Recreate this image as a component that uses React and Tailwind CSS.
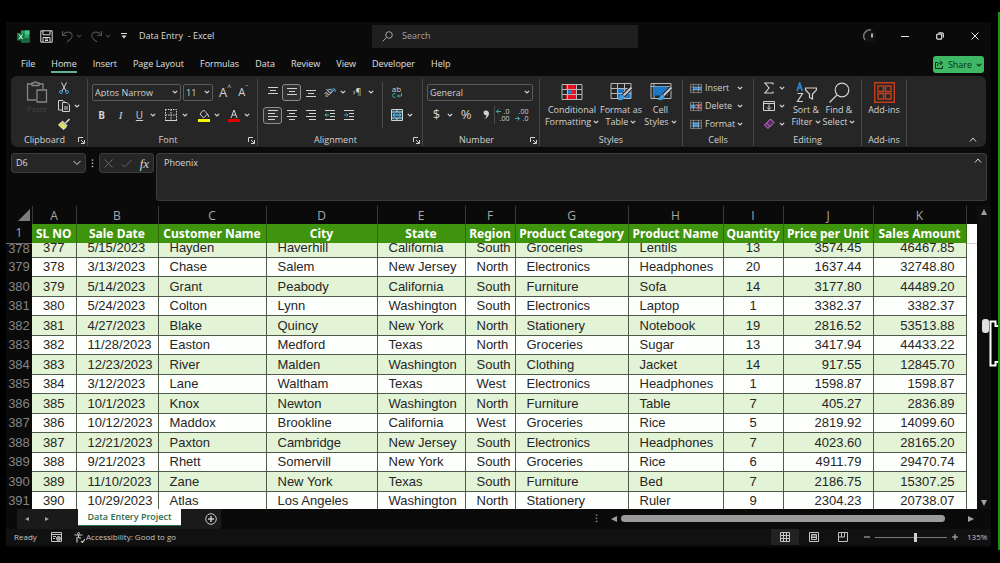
import React, { useState } from 'react';

const rows = [
  [378, 377, '5/15/2023', 'Hayden', 'Haverhill', 'California', 'South', 'Groceries', 'Lentils', 13, '3574.45', '46467.85'],
  [379, 378, '3/13/2023', 'Chase', 'Salem', 'New Jersey', 'North', 'Electronics', 'Headphones', 20, '1637.44', '32748.80'],
  [380, 379, '5/14/2023', 'Grant', 'Peabody', 'California', 'South', 'Furniture', 'Sofa', 14, '3177.80', '44489.20'],
  [381, 380, '5/24/2023', 'Colton', 'Lynn', 'Washington', 'South', 'Electronics', 'Laptop', 1, '3382.37', '3382.37'],
  [382, 381, '4/27/2023', 'Blake', 'Quincy', 'New York', 'North', 'Stationery', 'Notebook', 19, '2816.52', '53513.88'],
  [383, 382, '11/28/2023', 'Easton', 'Medford', 'Texas', 'North', 'Groceries', 'Sugar', 13, '3417.94', '44433.22'],
  [384, 383, '12/23/2023', 'River', 'Malden', 'Washington', 'South', 'Clothing', 'Jacket', 14, '917.55', '12845.70'],
  [385, 384, '3/12/2023', 'Lane', 'Waltham', 'Texas', 'West', 'Electronics', 'Headphones', 1, '1598.87', '1598.87'],
  [386, 385, '10/1/2023', 'Knox', 'Newton', 'Washington', 'North', 'Furniture', 'Table', 7, '405.27', '2836.89'],
  [387, 386, '10/12/2023', 'Maddox', 'Brookline', 'California', 'West', 'Groceries', 'Rice', 5, '2819.92', '14099.60'],
  [388, 387, '12/21/2023', 'Paxton', 'Cambridge', 'New Jersey', 'South', 'Electronics', 'Headphones', 7, '4023.60', '28165.20'],
  [389, 388, '9/21/2023', 'Rhett', 'Somervill', 'New York', 'South', 'Groceries', 'Rice', 6, '4911.79', '29470.74'],
  [390, 389, '11/10/2023', 'Zane', 'New York', 'Texas', 'South', 'Furniture', 'Bed', 7, '2186.75', '15307.25'],
  [391, 390, '10/29/2023', 'Atlas', 'Los Angeles', 'Washington', 'North', 'Stationery', 'Ruler', 9, '2304.23', '20738.07'],
];

const columns = [
  { letter: 'A', title: 'SL NO', width: 'w-[44px]', cell: 'justify-center' },
  { letter: 'B', title: 'Sale Date', width: 'w-[82px]', cell: 'pl-[11px]' },
  { letter: 'C', title: 'Customer Name', width: 'w-[108px]', cell: 'pl-[11px]' },
  { letter: 'D', title: 'City', width: 'w-[111px]', cell: 'pl-[11px]' },
  { letter: 'E', title: 'State', width: 'w-[88px]', cell: 'pl-[11px]' },
  { letter: 'F', title: 'Region', width: 'w-[50px]', cell: 'pl-[11px]' },
  { letter: 'G', title: 'Product Category', width: 'w-[113px]', cell: 'pl-[11px]' },
  { letter: 'H', title: 'Product Name', width: 'w-[95px]', cell: 'pl-[11px]' },
  { letter: 'I', title: 'Quantity', width: 'w-[60px]', cell: 'justify-center' },
  { letter: 'J', title: 'Price per Unit', width: 'w-[90px]', cell: 'justify-end pr-[11px]' },
  { letter: 'K', title: 'Sales Amount', width: 'w-[93px]', cell: 'justify-end pr-[11px]' },
];

const tabs = ['File', 'Home', 'Insert', 'Page Layout', 'Formulas', 'Data', 'Review', 'View', 'Developer', 'Help'];

const Svg = ({ className = 'size-3', box = '0 0 12 12', children }) => (
  <svg className={className} viewBox={box} fill="none" stroke="currentColor" strokeWidth="1" aria-hidden="true">
    {children}
  </svg>
);

const Chevron = () => (
  <Svg className="h-1 w-[6px] shrink-0" box="0 0 6 4">
    <path d="M.8 .8 3 3 5.2 .8" strokeWidth="1.2" />
  </Svg>
);

const Tool = ({ label, active, className = 'w-[19px]', children }) => (
  <button aria-label={label} className={`flex h-[17px] shrink-0 items-center justify-center rounded-[3px] ${active ? 'border border-[#8a8a8a] bg-[#303030]' : ''} ${className}`}>
    {children}
  </button>
);

const Drop = ({ label, className = 'w-2' }) => (
  <button aria-label={label} className={`flex h-[17px] shrink-0 items-center justify-center ${className}`}>
    <Chevron />
  </button>
);

const Rule = () => <span className="h-[18px] w-px shrink-0 bg-[#4a4a4a]" />;

const Group = ({ name, width, launcher, children }) => (
  <section aria-label={name} className={`flex shrink-0 flex-col border-r border-[#474747] ${width}`}>
    <div className="h-[55px]">{children}</div>
    <div className="flex h-3 items-center justify-center text-[9px]">
      <span className="flex-1 text-center">{name}</span>
      {launcher && (
        <button aria-label={`${name} settings`} className="mr-[2px]">
          <Svg className="size-[7px]" box="0 0 7 7">
            <path d="M.5 5V.5H5M3 3l3 3M6.5 3v3.5H3" />
          </Svg>
        </button>
      )}
    </div>
  </section>
);

const Select = ({ label, value, width }) => (
  <span className={`relative flex items-center ${width}`}>
    <select aria-label={label} className="h-[17px] w-full appearance-none rounded-[2px] border border-[#5c5c5c] bg-[#262626] pl-[2px] text-[9px] leading-none">
      <option>{value}</option>
    </select>
    <span className="pointer-events-none absolute right-[3px]"><Chevron /></span>
  </span>
);

// horizontal bars, each given as [x, y, length]
const Lines = ({ bars }) => (
  <Svg>
    {bars.map(([x, y, w]) => <path key={y} d={`M${x} ${y}h${w}`} />)}
  </Svg>
);

const GridIcon = ({ className, children }) => (
  <Svg className={className} box="0 0 22 18">
    {children}
    <path d="M1 1.500h20v15H1zM1 6.500h20M1 11.500h20M6.500 1.500v15M15.500 1.500v15" stroke="#b8b8b8" />
  </Svg>
);

const Brush = () => (
  <>
    <path d="M21.500 5.500 13 14" stroke="#222" strokeWidth="4" />
    <path d="m21.500 5.500-8 8" stroke="#c9c9c9" strokeWidth="2" />
    <path d="M13 13c-3-.5-3 2-5.500 4.500 3 1.500 7 .5 7-2.500z" fill="#3f9be0" stroke="none" />
  </>
);

const BigTool = ({ icon, top, bottom, width }) => (
  <button className={`flex shrink-0 flex-col items-center text-[9px] leading-3 ${width}`}>
    <span className="flex h-6 items-center">{icon}</span>
    <span>{top}</span>
    {bottom && <span className="flex items-center gap-[2px]">{bottom}<Chevron /></span>}
  </button>
);

const CellTool = ({ icon, name }) => (
  <button className="flex h-[18px] items-center text-[9px]">
    {icon}
    <span className="ml-[3px] w-8 text-left">{name}</span>
    <Chevron />
  </button>
);

const Decimal = ({ label, top, bottom, arrow }) => (
  <Tool label={label}>
    <span className="relative text-right text-[7px] leading-[7px]">
      <span className="block">{top}</span>
      <span className="block">{bottom}</span>
      <Svg className={`absolute -left-1 size-[5px] text-[#3fa9a9] ${arrow}`} box="0 0 5 5"><path d="M5 2.500H.5M2.500 .5l-2 2 2 2" /></Svg>
    </span>
  </Tool>
);

const TitleBar = () => (
  <header className="flex h-7 items-center">
    <div className="flex w-[366px] items-center pl-[11px] text-[#dcdcdc]">
      <Svg className="size-[13px]" box="0 0 13 13">
        <path d="M4 .5h8.500v12H4z" fill="#27a366" stroke="none" />
        <path d="M8 .5h4.500v4H8z" fill="#46c889" stroke="none" />
        <path d="M4 8h8.500v4.500H4z" fill="#17683f" stroke="none" />
        <path d="M0 3h7.500v7.500H0z" fill="#10793f" stroke="none" />
        <path d="m2 4.500 3.500 4.500M5.500 4.500 2 9" stroke="#fff" />
      </Svg>
      <button aria-label="Save" className="ml-[10px]">
        <Svg className="size-[13px]" box="0 0 13 13">
          <path d="M.8.800h11.400v11.400H.8zM3 .8v4h7v-4M3 12V7.500h7V12M5 9h3M5 10.500h3" />
        </Svg>
      </button>
      <button aria-label="Undo" className="ml-2 text-[#4c4c4c]">
        <Svg className="size-[13px]" box="0 0 13 13"><path d="M1.500 1v4.500H6M1.700 5.300C4 1.500 9 1 10.800 4c1.500 3-1 5-4.800 8" strokeWidth="1.200" /></Svg>
      </button>
      <span className="ml-[2px] text-[#444]"><Chevron /></span>
      <button aria-label="Redo" className="ml-2 text-[#4c4c4c]">
        <Svg className="size-[13px]" box="0 0 13 13"><path d="M11.500 1v4.500H7M11.300 5.300C9 1.500 4 1 2.200 4c-1.500 3 1 5 4.800 8" strokeWidth="1.200" /></Svg>
      </button>
      <span className="ml-[2px] text-[#444]"><Chevron /></span>
      <button aria-label="Customize toolbar" className="ml-[10px]">
        <Svg className="size-[6px]" box="0 0 6 6"><path d="M0 .5h6" /><path d="M.5 2.500h5L3 5.500z" fill="currentColor" stroke="none" /></Svg>
      </button>
      <h1 className="ml-3 text-[9px] font-medium">Data Entry&nbsp; - Excel</h1>
    </div>
    <label className="flex h-[23px] w-[266px] items-center gap-[9px] bg-[#1f1f1f] pl-[10px] text-[#a5a5a5]">
      <Svg className="size-[11px]" box="0 0 11 11"><circle cx="7" cy="4" r="3.300" /><path d="M4.500 6.500.5 10.500" /></Svg>
      <input aria-label="Search" placeholder="Search" className="w-40 bg-transparent text-[9px] outline-none placeholder:text-[#a5a5a5]" />
    </label>
    <div className="ml-auto flex items-center pr-3 text-[#e0e0e0]">
      <Svg className="mr-[23px] size-4" box="0 0 16 16">
        <circle cx="8" cy="8" r="6.500" fill="#131313" stroke="none" />
        <path d="M3 12A6.500 6.500 0 0 1 9 1.700" stroke="#777" strokeWidth="1.500" />
        <path d="M10 5.500v4" strokeWidth="1.500" />
      </Svg>
      <button aria-label="Minimize" className="mr-[27px]"><Svg className="size-2" box="0 0 8 8"><path d="M0 4.500h8" /></Svg></button>
      <button aria-label="Restore" className="mr-[27px]">
        <Svg className="size-2" box="0 0 8 8"><rect x=".7" y="2.200" width="5" height="5" rx="1" strokeWidth="1.200" /><path d="M2.500 .8H6q1.300 0 1.300 1.300v3.400" strokeWidth="1.200" /></Svg>
      </button>
      <button aria-label="Close"><Svg className="size-2" box="0 0 8 8"><path d="m.5.5 7 7M7.500.5l-7 7" /></Svg></button>
    </div>
  </header>
);

const Ribbon = () => (
  <div className="ml-[5px] mr-[5px] flex h-[71px] rounded-md bg-[#262626] pb-px pt-[3px] text-[#d2d2d2]">
    <Group name="Clipboard" width="w-[77px]" launcher>
      <div className="flex pl-[13px]">
        <button className="flex w-[26px] flex-col items-center pt-[2px] text-[8px] text-[#454545]">
          <Svg className="size-[22px] text-[#858585]" box="0 0 22 22">
            <path d="M6 3H1.500v16H10M13 3h4v5M6 4.500V2h2c0-1.500 3-1.500 3 0h2v2.500zM11 9h9.500v12H11z" strokeWidth="1.300" />
          </Svg>
          Paste
        </button>
        <div className="ml-1 flex flex-col gap-px">
          <Tool label="Cut"><Svg><path d="M3.500.5 8 9M8.500.5 4 9" /><circle cx="3" cy="10" r="1.500" stroke="#4a9fd8" /><circle cx="9" cy="10" r="1.500" stroke="#4a9fd8" /></Svg></Tool>
          <div className="flex items-center">
            <Tool label="Copy"><Svg><path d="M4 10H.5V.5H5L6.500 2M4.500 2.500H9l2.500 2.500v6.500h-7zM6 7h4M6 9h4" /></Svg></Tool>
            <Drop label="Copy options" />
          </div>
          <Tool label="Format Painter"><Svg><path d="m11.500 1-4 4M4 3l5 5" strokeWidth="1.600" /><path d="m3.500 4 5 5-3 2.500L.5 7z" fill="#dfe05e" stroke="#e6e6b0" /></Svg></Tool>
        </div>
      </div>
    </Group>

    <Group name="Font" width="w-[170px]" launcher>
      <div className="flex h-[26px] items-center pl-1">
        <Select label="Font family" value="Aptos Narrow" width="w-[89px]" />
        <span className="ml-[2px]"><Select label="Font size" value="11" width="w-[30px]" /></span>
        <button aria-label="Increase font size" className="ml-[6px] flex text-[13px] leading-4">A<span className="text-[7px] leading-2">^</span></button>
        <button aria-label="Decrease font size" className="ml-[7px] flex text-[11px] leading-4">A<span className="text-[7px] leading-2">ˇ</span></button>
      </div>
      <div className="flex h-5 items-center pl-1">
        <Tool label="Bold"><b className="text-[10px]">B</b></Tool>
        <Tool label="Italic"><i className="font-[Liberation_Serif] text-[11px]">I</i></Tool>
        <Tool label="Underline"><u className="text-[10px]">U</u></Tool>
        <Drop label="Underline options" />
        <span className="mx-1"><Rule /></span>
        <Tool label="Borders" className="w-3"><Svg><path d="M.5.5h11v11H.5zM6 .5v11M.5 6h11" strokeDasharray="1.500 1" /><path d="M0 11.500h12" /></Svg></Tool>
        <Drop label="Border options" className="w-4" />
        <span className="mr-[5px]"><Rule /></span>
        <Tool label="Fill color" className="w-3">
          <Svg className="h-[13px] w-3" box="0 0 12 13"><path d="m5.500 1 4 4-4 4-3.500-4zM9.500 5l1.500 3" /><path d="M0 10h12v3H0z" fill="#f5f500" stroke="none" /></Svg>
        </Tool>
        <Drop label="Fill options" className="w-[14px]" />
        <Tool label="Font color" className="ml-1 w-3">
          <Svg className="h-[13px] w-3" box="0 0 12 13"><path d="M3 9l3-8 3 8M4 6h4" /><path d="M0 10h12v3H0z" fill="#e00000" stroke="none" /></Svg>
        </Tool>
        <Drop label="Font color options" className="w-[14px]" />
      </div>
    </Group>

    <Group name="Alignment" width="w-[165px]" launcher>
      <div className="flex pl-[5px]">
        <div className="w-[119px]">
          <div className="flex h-[26px] items-center">
            <Tool label="Top align"><Lines bars={[[1, 1.5, 10], [3, 4.5, 6], [1, 7.5, 10]]} /></Tool>
            <Tool label="Middle align" active><Lines bars={[[1, 2.5, 10], [3, 5.5, 6], [1, 8.5, 10]]} /></Tool>
            <Tool label="Bottom align"><Lines bars={[[1, 4.5, 10], [3, 7.5, 6], [1, 10.5, 10]]} /></Tool>
            <Tool label="Orientation">
              <span className="-rotate-45 text-[8px]">ab</span>
              <Svg className="-ml-1 size-2 text-[#4a9fd8]" box="0 0 8 8"><path d="m1 7 6-6M4 1h3v3" /></Svg>
            </Tool>
            <Drop label="Orientation options" />
            <Tool label="Text direction" className="w-5 text-[9px]">›¶</Tool>
            <Drop label="Direction options" />
          </div>
          <div className="flex h-5 items-center">
            <Tool label="Align left" active><Lines bars={[[1, 1.5, 10], [1, 4.5, 7], [1, 7.5, 10], [1, 10.5, 7]]} /></Tool>
            <Tool label="Center"><Lines bars={[[1, 1.5, 10], [3, 4.5, 6], [1, 7.5, 10], [3, 10.5, 6]]} /></Tool>
            <Tool label="Align right"><Lines bars={[[1, 1.5, 10], [4, 4.5, 7], [1, 7.5, 10], [4, 10.5, 7]]} /></Tool>
            <Tool label="Decrease indent"><Svg><path d="M1 1.500h10M6 4.500h5M6 7.500h5M1 10.500h10" /><path d="M5 6H1M2.500 4.500 1 6l1.500 1.500" stroke="#49c2a4" /></Svg></Tool>
            <Tool label="Increase indent"><Svg><path d="M1 1.500h10M6 4.500h5M6 7.500h5M1 10.500h10" /><path d="M1 6h4M3.500 4.500 5 6 3.500 7.500" stroke="#4a9fd8" /></Svg></Tool>
          </div>
        </div>
        <div className="mt-[3px] h-[46px] border-l border-[#4a4a4a] pl-1">
          <Tool label="Wrap text" className="mt-px w-[19px]">
            <span className="flex flex-col text-[8px] leading-2">
              ab
              <Svg className="h-[5px] w-[10px]" box="0 0 10 5"><path d="M3.500 .8Q.5 0 .5 2.500T3.500 4.200M9.500 0v3H5.500M7 1.500 5.500 3 7 4.500" stroke="#3fa9a9" /></Svg>
            </span>
          </Tool>
          <div className="mt-[6px] flex">
            <Tool label="Merge and center"><Svg><path d="M.5.5h11v11H.5z" fill="#17506b" /><path d="M.5 3h11M.5 9h11M6 .5V3M6 9v2.500" /><path d="M2 6h8M3.500 4.500 2 6l1.500 1.500M8.500 4.500 10 6 8.500 7.500" stroke="#7cc7ee" /></Svg></Tool>
            <Drop label="Merge options" />
          </div>
        </div>
      </div>
    </Group>

    <Group name="Number" width="w-[117px]" launcher>
      <div className="flex h-[26px] items-center pl-1">
        <Select label="Number format" value="General" width="w-[106px]" />
      </div>
      <div className="flex h-5 items-center pl-1">
        <Tool label="Currency" className="w-[19px] text-[13px]">$</Tool>
        <Drop label="Currency options" />
        <Tool label="Percent" className="w-6 text-[13px]">%</Tool>
        <Tool label="Comma style" className="w-4"><Svg className="h-3 w-2" box="0 0 8 12"><path d="M4 1.500a2.300 2.300 0 1 0 .5 4.500C4.500 8 3.500 9 2 10c3-.5 5-3 5-5.500C7 2.500 5.500 1.500 4 1.500z" fill="currentColor" stroke="none" /></Svg></Tool>
        <Rule />
        <Decimal label="Increase decimal" top=".0" bottom=".00" arrow="top-[1px]" />
        <Decimal label="Decrease decimal" top=".00" bottom=".0" arrow="bottom-[1px] rotate-180" />
      </div>
    </Group>

    <Group name="Styles" width="w-[143px]">
      <div className="flex pl-[5px] pt-[1px]">
        <BigTool width="w-[54px]" top="Conditional" bottom="Formatting" icon={
          <GridIcon className="h-[18px] w-[22px]"><path d="M4.500 1.500h10v5h-10zM4.500 11.500h11v5h-11zM11 6.500h4.500v5H11z" fill="#e81123" stroke="none" /><path d="M6 7.500h5v3H6z" fill="#2b88d8" stroke="none" /></GridIcon>
        } />
        <BigTool width="w-[44px]" top="Format as" bottom="Table" icon={
          <Svg className="h-5 w-[22px]" box="0 0 22 20">
            <path d="M7 7h14v10H7z" fill="#1e78c8" stroke="none" />
            <path d="M1 1.500h20v15H1zM1 6.500h20M1 11.500h20M7.500 1.500v15M14.500 1.500v15" stroke="#b8b8b8" />
            <Brush />
          </Svg>
        } />
        <BigTool width="w-[35px]" top="Cell" bottom="Styles" icon={
          <Svg className="h-5 w-[22px]" box="0 0 22 20">
            <path d="M1 1.500h20v15H1zM1 4.500h20M4 1.500v15" stroke="#b8b8b8" />
            <path d="M4 4.500h14v9H4z" fill="#1e78c8" stroke="none" />
            <Brush />
          </Svg>
        } />
      </div>
    </Group>

    <Group name="Cells" width="w-[71px]">
      <div className="flex flex-col pl-[7px]">
        <CellTool name="Insert" icon={<GridIcon className="h-[11px] w-3"><path d="M6 6h15v6H6z" fill="#2b88d8" stroke="none" /></GridIcon>} />
        <CellTool name="Delete" icon={<GridIcon className="h-[11px] w-3"><path d="M1 6h9v6H1z" fill="#2b88d8" stroke="none" /><path d="m12 5 8 8M20 5l-8 8" stroke="#e8404a" strokeWidth="2.500" /></GridIcon>} />
        <CellTool name="Format" icon={<GridIcon className="h-[11px] w-3"><path d="M5 5h12v9H5z" fill="#2b88d8" stroke="none" /></GridIcon>} />
      </div>
    </Group>

    <Group name="Editing" width="w-[108px]">
      <div className="flex pl-[5px]">
        <div className="flex w-[30px] flex-col">
          <div className="flex h-[18px] items-center"><Tool label="AutoSum"><Svg><path d="M10 2.500V1H2l4 5-4 5h8V9.500" strokeWidth="1.200" /></Svg></Tool><Drop label="Sum options" /></div>
          <div className="flex h-[18px] items-center"><Tool label="Fill"><Svg><path d="M.5 1.500h11v9H.5zM.5 3.500h11M6 4.500v5M4 7.500l2 2 2-2" /></Svg></Tool><Drop label="Fill direction" /></div>
          <div className="flex h-[18px] items-center"><Tool label="Clear"><Svg><path d="m7.500 1 3.500 3.500-6 6L1.500 7z" fill="#5c2a63" stroke="#d078dc" /><path d="m3.500 5 3.500 3.500" stroke="#d078dc" /></Svg></Tool><Drop label="Clear options" /></div>
        </div>
        <div className="flex pt-[1px]">
          <BigTool width="w-[34px]" top="Sort &amp;" bottom="Filter" icon={
            <Svg className="h-[21px] w-[21px]" box="0 0 21 21">
              <path d="m1 9 2.700-8 2.700 8M2 6h3.500" stroke="#2b88d8" strokeWidth="1.500" />
              <path d="M1.500 11.500h5l-5 8h5.500M9.500 6h11v2l-4 4v5l-3-1.500V12l-4-4z" strokeWidth="1.200" />
            </Svg>
          } />
          <BigTool width="w-[32px]" top="Find &amp;" bottom="Select" icon={
            <Svg className="h-[21px] w-[21px]" box="0 0 21 21"><circle cx="13" cy="8" r="6.800" strokeWidth="1.200" /><path d="m8 13-7.500 7.500" strokeWidth="1.200" /></Svg>
          } />
        </div>
      </div>
    </Group>

    <Group name="Add-ins" width="w-[45px]">
      <div className="pt-[1px]">
        <BigTool width="w-[44px]" top="Add-ins" icon={
          <Svg className="size-[21px] text-[#c43e1c]" box="0 0 21 21"><path d="M.7.700h19.600v19.600H.7zM4 4h5.500v5.500H4zM11.500 4H17v5.500h-5.500zM4 11.500h5.500V17H4zM11.500 11.500H17V17h-5.500z" strokeWidth="1.400" /></Svg>
        } />
      </div>
    </Group>

    <button aria-label="Collapse ribbon" className="mb-1 ml-auto mr-[9px] self-end">
      <Svg className="h-[5px] w-2" box="0 0 8 5"><path d="M1 4.500 4 1l3 3.500" /></Svg>
    </button>
  </div>
);

const FormulaBar = () => (
  <div className="mt-[6px] flex items-start pl-[5px] pr-[4px] text-[#d8d8d8]">
    <label className="flex h-5 w-[75px] items-center rounded-[3px] border border-[#3c3c3c] bg-[#262626] pr-1">
      <input aria-label="Name box" defaultValue="D6" className="w-full min-w-0 bg-transparent pl-1 text-[9px] outline-none" />
      <Svg className="h-[6px] w-2 shrink-0" box="0 0 8 6"><path d="m.5 1 3.500 3.500L7.500 1" /></Svg>
    </label>
    <span className="flex h-5 w-[13px] items-center justify-center text-[11px]">⁝</span>
    <div className="flex h-5 w-[55px] items-center justify-around rounded-[3px] border border-[#3c3c3c] bg-[#262626] text-[#666]">
      <button aria-label="Cancel"><Svg className="size-[9px]" box="0 0 9 9"><path d="m.5.5 8 8M8.500.5l-8 8" /></Svg></button>
      <button aria-label="Enter"><Svg className="size-[11px]" box="0 0 11 11"><path d="m.5 6 3 3 7-7" /></Svg></button>
      <button aria-label="Insert function" className="font-[Liberation_Serif] text-[13px] italic leading-none text-[#d8d8d8]">fx</button>
    </div>
    <div className="ml-[2px] flex h-12 flex-1 items-start rounded-[3px] border border-[#3c3c3c] bg-[#262626] pl-[7px] pr-1 pt-1">
      <textarea aria-label="Formula" defaultValue="Phoenix" className="h-10 flex-1 resize-none bg-transparent text-[9px] leading-[10px] outline-none" />
      <button aria-label="Collapse formula bar"><Svg className="h-[5px] w-2" box="0 0 8 5"><path d="M1 4.500 4 1l3 3.500" /></Svg></button>
    </div>
  </div>
);

const Sheet = () => (
  <div className="mt-[5px] flex">
    <table className="w-full table-fixed border-collapse font-['Liberation_Sans',sans-serif] text-[13px] text-[#262626]">
      <thead>
        <tr className="h-[18px] bg-[#0a0a0a] font-['Open_Sans',sans-serif] text-[12px] leading-none text-[#a8a8a8]">
          <th className="w-[26px] border-r border-[#3a3a3a]">
            <Svg className="ml-auto mr-[2px] size-3"><path d="M12 0v12H0z" fill="#7c7c7c" stroke="none" /></Svg>
          </th>
          {columns.map((col) => (
            <th key={col.letter} className={`border-r border-[#3a3a3a] p-0 pt-[2px] font-normal ${col.width}`}>{col.letter}</th>
          ))}
          <th />
        </tr>
        <tr className="h-[19px] bg-[#3f940d] font-['Noto_Sans',sans-serif] text-[12px] leading-none text-white">
          <th className="border-b border-[#6b6b6b] bg-[#0a0a0a] font-['Open_Sans',sans-serif] font-normal text-[#a8a8a8]">1</th>
          {columns.map((col) => (
            <th key={col.title} className="whitespace-nowrap border-r border-[#2c6b08] p-0 pt-px font-bold">{col.title}</th>
          ))}
          <th className="border-b border-[#d0d0d0] bg-white" />
        </tr>
      </thead>
      <tbody>
        {rows.map(([num, ...cells], r) => {
          // the top and bottom rows are cut by the scroll position
          const first = r === 0;
          const last = r === rows.length - 1;
          const height = first ? 'h-[14px] items-end' : last ? 'h-[17px] items-start' : r % 2 ? 'h-[18px] items-end' : 'h-[19px] items-end';
          return (
            <tr key={num} className={r % 2 ? 'bg-[#fdfffc]' : 'bg-[#e2f3d6]'}>
              <th className="bg-[#0a0a0a] p-0 font-normal text-[#858585]">
                <div className={`flex justify-center overflow-hidden leading-[18px] ${height}`}>{num}</div>
              </th>
              {cells.map((value, c) => (
                <td key={columns[c].letter} className={`border-r border-[#4f5a4a] p-0 ${last ? '' : 'border-b'}`}>
                  <div className={`flex overflow-hidden whitespace-nowrap leading-[18px] ${height} ${columns[c].cell}`}>{value}</div>
                </td>
              ))}
              <td className="bg-white" />
            </tr>
          );
        })}
      </tbody>
    </table>
    <div className="relative flex w-[14px] shrink-0 flex-col items-center justify-between bg-[#0e0e0e] py-[3px] text-[#a0a0a0]">
      <Svg className="size-[6px]" box="0 0 6 6"><path d="M0 6h6L3 0z" fill="currentColor" stroke="none" /></Svg>
      <span className="absolute left-[5px] top-[113px] h-[14px] w-[7px] rounded-[3px] bg-[#e0e0e0]" />
      <Svg className="absolute left-3 top-[114px] h-[47px] w-[9px] text-white" box="0 0 9 47">
        <path d="M9 6H6.500V1.500H1.500v44h5V42H9" strokeWidth="2" />
      </Svg>
      <Svg className="size-[6px]" box="0 0 6 6"><path d="M0 0h6L3 6z" fill="currentColor" stroke="none" /></Svg>
    </div>
  </div>
);

const SheetTabs = () => (
  <div className="flex h-5 items-start text-[#a0a0a0]">
    <div className="ml-[11px] flex h-full w-[204px] bg-[#1a1a1a]">
      <div className="flex w-[61px] items-center gap-4 pl-2">
        <button aria-label="Previous sheet"><Svg className="size-1" box="0 0 4 4"><path d="M4 0v4L0 2z" fill="currentColor" stroke="none" /></Svg></button>
        <button aria-label="Next sheet"><Svg className="size-1" box="0 0 4 4"><path d="M0 0v4l4-2z" fill="currentColor" stroke="none" /></Svg></button>
      </div>
      <button className="h-[17px] w-[103px] whitespace-nowrap border-b border-[#217346] bg-white text-[9px] font-semibold text-[#2c6b50]">Data Entery Project</button>
      <button aria-label="New sheet" className="ml-6 text-[#c8c8c8]">
        <Svg><circle cx="6" cy="6" r="5.300" /><path d="M6 3v6M3 6h6" strokeWidth="1.500" /></Svg>
      </button>
    </div>
    <div className="ml-auto flex h-[19px] w-[396px] items-center">
      <span className="w-3 text-[11px]">⁝</span>
      <span className="ml-1 flex w-[371px] items-center">
        <Svg className="size-[6px] shrink-0" box="0 0 6 6"><path d="M6 0v6L0 3z" fill="currentColor" stroke="none" /></Svg>
        <span className="ml-1 h-[7px] w-[324px] rounded-full bg-[#9a9a9a]" />
        <Svg className="ml-auto mr-2 size-[6px]" box="0 0 6 6"><path d="M0 0v6l6-3z" fill="currentColor" stroke="none" /></Svg>
      </span>
    </div>
  </div>
);

const StatusBar = () => {
  const [zoom, setZoom] = useState(56);
  return (
    <footer className="flex h-4 items-center bg-[#111] pl-2 text-[8px] font-medium text-[#c4c4c4]">
      <span className="w-[37px]">Ready</span>
      <Svg className="h-[10px] w-[11px]" box="0 0 11 10"><path d="M.5.5h10v9H.5zM.5 2.500h10M2 4.500h3M2 6.500h2" /><circle cx="7.500" cy="6.500" r="2" fill="#999" /></Svg>
      <span className="ml-3 flex items-center gap-[1px]">
        <Svg className="size-[11px]" box="0 0 11 11"><circle cx="4.500" cy="1.500" r="1" /><path d="M.5 3h8M4.500 3v3M3 5v5.500M6 5v2M7 9l1.500 1.500L11 7" strokeWidth="1.200" /></Svg>
        Accessibility: Good to go
      </span>
      <div className="ml-auto flex h-full items-center">
        <button aria-label="Normal view" className="flex h-full w-7 items-center justify-center bg-[#222]"><Svg className="size-[10px]" box="0 0 10 10"><path d="M.5.5h9v9h-9zM.5 3.500h9M.5 6.500h9M3.500.5v9M6.500.5v9" /></Svg></button>
        <button aria-label="Page layout view" className="flex w-[29px] justify-center"><Svg className="size-[10px]" box="0 0 10 10"><path d="M.5.5h9v9h-9zM2.500 2.500h5v5h-5zM3 4h4M3 5.500h4" /></Svg></button>
        <button aria-label="Page break view" className="flex w-[29px] justify-center"><Svg className="size-[10px]" box="0 0 10 10"><path d="M.5.5h9v9h-9zM3.500.5V5M6.500.5V5H.5" /></Svg></button>
        <button aria-label="Zoom out" className="ml-1 w-3 text-center"><Svg className="mx-auto size-[6px]" box="0 0 6 6"><path d="M0 3h6" /></Svg></button>
        <input
          type="range"
          aria-label="Zoom"
          value={zoom}
          onChange={(e) => setZoom(e.target.value)}
          className="mx-[2px] h-[9px] w-[72px] appearance-none bg-transparent [&::-webkit-slider-runnable-track]:h-px [&::-webkit-slider-runnable-track]:bg-[#7a7a7a] [&::-webkit-slider-thumb]:-mt-1 [&::-webkit-slider-thumb]:h-[9px] [&::-webkit-slider-thumb]:w-[3px] [&::-webkit-slider-thumb]:appearance-none [&::-webkit-slider-thumb]:bg-[#cfcfcf]"
        />
        <button aria-label="Zoom in" className="w-3"><Svg className="mx-auto size-[6px]" box="0 0 6 6"><path d="M0 3h6M3 0v6" /></Svg></button>
        <span className="ml-[6px] mr-1 w-5">135%</span>
      </div>
    </footer>
  );
};

const App = () => {
  const [activeTab, setActiveTab] = useState('Home');

  return (
    <div className="flex min-h-screen bg-black font-['Open_Sans',sans-serif]">
      <main className="mb-4 ml-[6px] mt-[22px] min-w-0 flex-1 bg-[#0a0a0a]">
        <TitleBar />
        <nav className="flex h-[26px] items-center pl-[15px] pr-[7px] pt-[3px]">
          <div className="flex gap-4 whitespace-nowrap text-[9px] font-medium text-[#e0e0e0]">
            {tabs.map((tab) => (
              <button
                key={tab}
                onClick={() => setActiveTab(tab)}
                className={`border-b-2 leading-[14px] ${tab === activeTab ? 'border-[#62b394]' : 'border-transparent'}`}
              >
                {tab}
              </button>
            ))}
          </div>
          <button className="ml-auto flex h-[17px] w-[51px] items-center justify-center gap-1 rounded-[3px] bg-[#3fb865] text-[9px] text-[#0b2f18]">
            <Svg className="size-[9px]" box="0 0 9 9"><path d="M3 2.500H.5v6h7V6M2.500 6c0-2.500 1.500-3 4-3M5 .8 7.500 3 5 5.200" /></Svg>
            Share
            <Chevron />
          </button>
        </nav>
        <Ribbon />
        <FormulaBar />
        <Sheet />
        <SheetTabs />
        <StatusBar />
      </main>
      <div className="mb-[13px] ml-[7px] mt-3 w-[2px] bg-[#0a9a0a]" />
    </div>
  );
};

export default App;
